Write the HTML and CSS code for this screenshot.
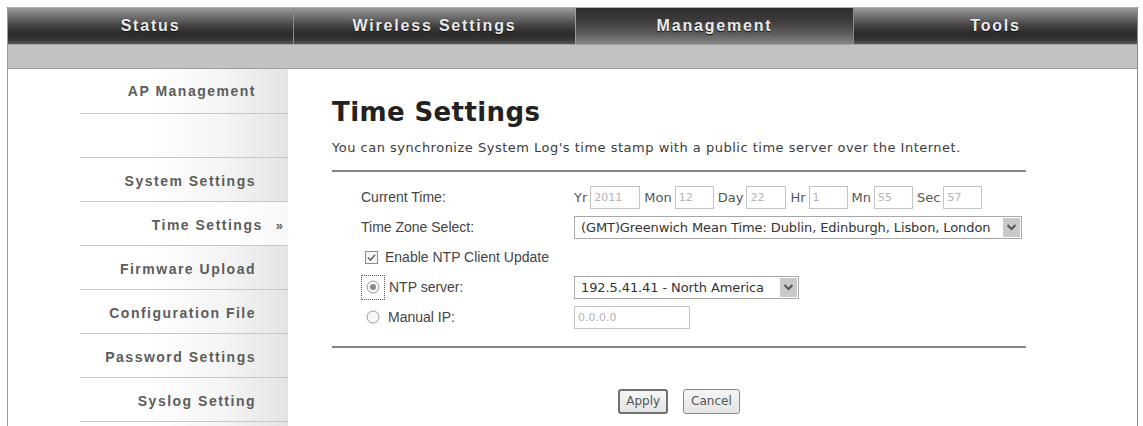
FILE: index.html
```html
<!DOCTYPE html>
<html>
<head>
<meta charset="utf-8">
<title>Time Settings</title>
<link rel="stylesheet" href="styles.css">
</head>
<body>
<div class="frame">
  <nav class="tabs">
    <div class="tab">Status</div>
    <div class="tab">Wireless Settings</div>
    <div class="tab active">Management</div>
    <div class="tab">Tools</div>
  </nav>
  <div class="subbar"></div>
  <div class="main">
    <aside class="side">
      <div class="item first">AP Management</div>
      <div class="item"></div>
      <div class="item">System Settings</div>
      <div class="item current">Time Settings<span class="mark">&raquo;</span></div>
      <div class="item">Firmware Upload</div>
      <div class="item">Configuration File</div>
      <div class="item">Password Settings</div>
      <div class="item">Syslog Setting</div>
    </aside>
    <section class="content">
      <h1 class="title">Time Settings</h1>
      <p class="desc">You can synchronize System Log's time stamp with a public time server over the Internet.</p>
      <div class="rule"></div>
      <div class="form">
        <div class="row">
          <span class="label">Current Time:</span>
          <div class="ctrl">
            <span class="unit">Yr</span><span class="box w50">2011</span>
            <span class="unit">Mon</span><span class="box">12</span>
            <span class="unit">Day</span><span class="box w40">22</span>
            <span class="unit">Hr</span><span class="box">1</span>
            <span class="unit">Mn</span><span class="box">55</span>
            <span class="unit">Sec</span><span class="box">57</span>
          </div>
        </div>
        <div class="row">
          <span class="label">Time Zone Select:</span>
          <div class="sel wide">
            <span class="sel-text">(GMT)Greenwich Mean Time: Dublin, Edinburgh, Lisbon, London</span>
            <span class="arrow"><svg width="17" height="18" viewBox="0 0 17 18"><polyline points="4.5,7 8.5,11 12.5,7" fill="none" stroke="#555" stroke-width="2"/></svg></span>
          </div>
        </div>
        <div class="row">
          <span class="check-wrap">
            <svg class="cb" width="13" height="13" viewBox="0 0 13 13"><rect x="0.5" y="0.5" width="12" height="12" fill="#f6f6f6" stroke="#8c8c8c"/><polyline points="3,6.5 5.5,9 10,3.8" fill="none" stroke="#666" stroke-width="1.6"/></svg>
            <span class="opt">Enable NTP Client Update</span>
          </span>
        </div>
        <div class="row">
          <span class="label radio-label">
            <span class="focus"><svg width="14" height="14" viewBox="0 0 14 14"><circle cx="7" cy="7" r="6" fill="#f8f8f8" stroke="#9a9a9a"/><circle cx="7" cy="7" r="3" fill="#8a8a8a"/></svg></span>
            <span class="opt">NTP server:</span>
          </span>
          <div class="sel narrow">
            <span class="sel-text">192.5.41.41 - North America</span>
            <span class="arrow"><svg width="17" height="18" viewBox="0 0 17 18"><polyline points="4.5,7 8.5,11 12.5,7" fill="none" stroke="#555" stroke-width="2"/></svg></span>
          </div>
        </div>
        <div class="row">
          <span class="label radio-label">
            <span class="focus plain"><svg width="14" height="14" viewBox="0 0 14 14"><circle cx="7" cy="7" r="6" fill="#f8f8f8" stroke="#9a9a9a"/></svg></span>
            <span class="opt">Manual IP:</span>
          </span>
          <span class="box ip">0.0.0.0</span>
        </div>
      </div>
      <div class="rule low"></div>
      <div class="buttons">
        <span class="btn apply">Apply</span>
        <span class="btn">Cancel</span>
      </div>
    </section>
  </div>
</div>
</body>
</html>
```

FILE: styles.css
```css
html, body {
  margin: 0;
  padding: 0;
  background: #ffffff;
}

.frame {
  margin: 7px 0 0 7px;
  width: 1131px;
  height: 419px;
  box-sizing: border-box;
  border-left: 1px solid #9a9a9a;
  border-right: 1px solid #8a8a8a;
  display: flex;
  flex-direction: column;
}

.tabs {
  display: grid;
  grid-template-columns: 285px 282px 278px 1fr;
  border-top: 1px solid #b5b5b5;
  height: 36px;
}

.tab {
  display: flex;
  align-items: center;
  justify-content: center;
  font-family: "Liberation Sans", Arial, sans-serif;
  font-weight: bold;
  font-size: 16px;
  letter-spacing: 1.8px;
  color: #ebebeb;
  text-shadow: 0 1px 1px #111;
  background: linear-gradient(#9a9a9a 0%, #737272 22%, #403d3d 52%, #2c2929 72%, #353232 86%, #575555 100%);
}

.tab + .tab {
  border-left: 1px solid #8c8c8c;
}

.tab.active {
  background: linear-gradient(#2f2d2d 0%, #3c3a3a 35%, #5c5b5b 70%, #858585 100%);
  border-left: 1px solid #9c9c9c;
}

.subbar {
  height: 23px;
  background: #c3c1c1;
  border-top: 1px solid #a5a5a5;
  border-bottom: 1px solid #9e9e9e;
}

.main {
  display: flex;
  flex: 1;
}

.side {
  width: 280px;
  background: linear-gradient(to right, #ffffff 0%, #ffffff 50%, #f4f4f4 78%, #e4e4e4 100%);
  font-family: "Liberation Sans", Arial, sans-serif;
  font-weight: bold;
  font-size: 14px;
  letter-spacing: 1.5px;
  color: #5c5c5c;
}

.item {
  margin-left: 72px;
  height: 44px;
  box-sizing: border-box;
  padding: 3px 32px 0 0;
  border-bottom: 1px solid #c6c6c6;
  display: flex;
  align-items: center;
  justify-content: flex-end;
}

.item.first {
  height: 45px;
  padding-top: 0;
}

.item.current {
  background: linear-gradient(to right, #ffffff 0%, #ffffff 70%, #f8f8f8 100%);
  padding-right: 5px;
}

.mark {
  margin-left: 13px;
  font-size: 13px;
  letter-spacing: 0;
}

.content {
  flex: 1;
  padding-left: 44px;
}

.title {
  margin: 28px 0 0 0;
  font-family: "DejaVu Sans", Verdana, sans-serif;
  font-weight: bold;
  font-size: 26px;
  line-height: 30px;
  letter-spacing: 0.4px;
  color: #222222;
}

.desc {
  margin: 13px 0 0 0;
  font-family: "DejaVu Sans", Verdana, sans-serif;
  font-size: 13px;
  line-height: 16px;
  letter-spacing: 0.5px;
  color: #3c3c3c;
}

.rule {
  width: 694px;
  height: 2px;
  background: #858585;
  margin-top: 14px;
}

.rule.low {
  margin-top: 14px;
}

.form {
  margin-top: 10px;
  padding-left: 29px;
  font-family: "Liberation Sans", Arial, sans-serif;
  font-size: 14px;
  color: #444444;
}

.row {
  height: 30px;
  display: flex;
  align-items: center;
}

.label {
  width: 213px;
  flex: none;
}

.ctrl {
  display: flex;
  align-items: center;
}

.unit {
  font-family: "DejaVu Sans", Verdana, sans-serif;
  font-size: 13px;
  color: #555555;
  margin-right: 3px;
}

.box {
  display: inline-block;
  width: 39px;
  height: 23px;
  box-sizing: border-box;
  border: 1px solid #c4c4c4;
  padding-left: 3px;
  margin-right: 4px;
  font-family: "DejaVu Sans", Verdana, sans-serif;
  font-size: 11px;
  line-height: 21px;
  color: #b4b4b4;
}

.box.w50 {
  width: 50px;
}

.box.w40 {
  width: 40px;
}

.box.ip {
  width: 116px;
  height: 23px;
  margin-top: 1px;
}

.sel {
  position: relative;
  height: 23px;
  box-sizing: border-box;
  border: 1px solid #a8a8a8;
  padding-left: 6px;
  font-family: "DejaVu Sans", Verdana, sans-serif;
  font-size: 13px;
  letter-spacing: -0.1px;
  line-height: 21px;
  color: #333333;
  background: #ffffff;
}

.sel.wide {
  width: 448px;
}

.sel.narrow {
  width: 225px;
}

.arrow {
  position: absolute;
  right: 1px;
  top: 1px;
  width: 17px;
  height: 19px;
  background: #c9c9c9;
  display: flex;
  align-items: center;
  justify-content: center;
}

.check-wrap {
  display: flex;
  align-items: center;
  margin-left: 4px;
}

.cb {
  margin-right: 7px;
}

.radio-label {
  display: flex;
  align-items: center;
}

.focus {
  width: 24px;
  height: 25px;
  box-sizing: border-box;
  border: 1px dotted #555555;
  display: flex;
  align-items: center;
  justify-content: center;
  margin-right: 4px;
}

.focus.plain {
  border-color: transparent;
  margin-right: 3px;
}

.buttons {
  width: 694px;
  display: flex;
  justify-content: center;
  gap: 15px;
  margin-top: 41px;
}

.btn {
  display: inline-block;
  height: 25px;
  box-sizing: border-box;
  padding: 0 7px;
  border: 1px solid #8a8a8a;
  border-radius: 3px;
  background: linear-gradient(#f6f6f6, #e4e4e4);
  font-family: "DejaVu Sans", Verdana, sans-serif;
  font-size: 12px;
  line-height: 23px;
  color: #555555;
}

.btn.apply {
  border: 2px solid #707070;
  line-height: 21px;
  padding: 0 6px;
}
```
